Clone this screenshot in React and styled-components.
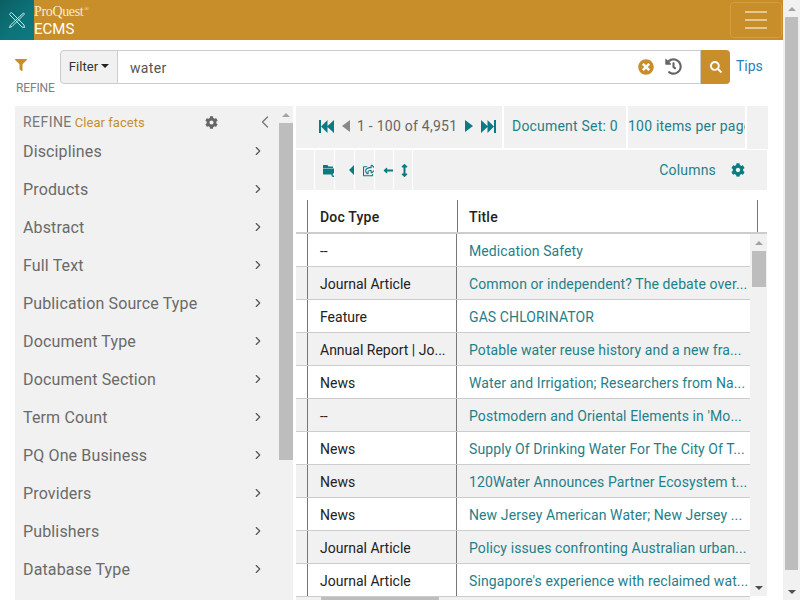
import React from "react";
import styled, { createGlobalStyle } from "styled-components";
import { FaFilter, FaTimesCircle, FaHistory, FaSearch, FaCog, FaRegShareSquare, FaLongArrowAltLeft, FaArrowsAltV } from "react-icons/fa";
import { ChevronLeft, ChevronRight } from "lucide-react";

const Global = createGlobalStyle`
  html, body { margin: 0; padding: 0; height: 100%; overflow: hidden; background: #fff; }
  body { font-family: Roboto, "Liberation Sans", sans-serif; }
`;

const Page = styled.div`display: flex; width: 800px; height: 600px; overflow: hidden;`;
const Main = styled.div`width: 783px; height: 600px; display: flex; flex-direction: column; overflow: hidden;`;

const ScrollTrack = styled.div`
  flex: none; width: ${p => p.$w || 17}px; height: ${p => p.$h ? p.$h + "px" : "100%"};
  background: #f1f1f1; display: flex; flex-direction: column; align-items: center;
`;
const ArrowBox = styled.div`
  flex: none; height: ${p => p.$h || 17}px; width: 100%; display: flex; align-items: center; justify-content: center;
  &::before {
    content: ""; width: 0; height: 0; border-left: 4px solid transparent; border-right: 4px solid transparent;
    ${p => p.$down ? "border-top: 4px solid #505050;" : "border-bottom: 4px solid #a3a3a3;"}
  }
`;
const Thumb = styled.div`flex: none; width: ${p => p.$w || 13}px; height: ${p => p.$h}px; background: #bdbdbd;`;
const TrackFill = styled.div`flex: 1;`;

const Header = styled.header`flex: none; height: 40px; background: #c88e29; display: flex; align-items: stretch;`;
const LogoBox = styled.div`
  width: 34px; background: linear-gradient(135deg, #0c5f63 0%, #0c7379 55%, #0d7a80 100%);
  display: flex; align-items: center; justify-content: center;
`;
const Brand = styled.div`color: #fff; display: flex; flex-direction: column; padding-top: 4px;`;
const BrandTop = styled.div`font-family: "Liberation Serif", serif; font-size: 14px; line-height: 15px; letter-spacing: -0.35px; color: #f6ead4;
  sup { font-size: 6px; line-height: 0; vertical-align: 5px; margin-left: 1px; }`;
const BrandName = styled.div`font-size: 15px; line-height: 17px; margin-top: 2px; font-weight: 400;`;
const Burger = styled.button`
  margin: 2px 1px 2px auto; width: 52px; height: 36px; background: transparent; border: 1px solid #cf9d44; border-radius: 4px; padding: 0;
  display: flex; flex-direction: column; align-items: center; justify-content: center; gap: 6px;
`;
const BurgerBar = styled.span`display: block; width: 22px; height: 2px; background: #e4c793;`;

const SearchRow = styled.div`flex: none; height: 50px; padding: 10px 0 0 15px; display: flex; align-items: flex-start;`;
const RefineCol = styled.div`width: 45px; color: #808080; font-size: 12px; height: 50px; display: flex; flex-direction: column;`;
const RefineIcon = styled.div`color: #c88e29; font-size: 12px; height: 14px; padding-top: 9px; line-height: 0;`;
const RefineLabel = styled.div`margin-top: 8px; padding-left: 1px; line-height: 14px; letter-spacing: -0.15px;`;
const SearchGroup = styled.div`width: 670px; height: 34px; display: flex; box-sizing: border-box;`;
const FilterBtn = styled.div`
  width: 58px; box-sizing: border-box; background: #f1f1f1; border: 1px solid #ccc; border-radius: 4px 0 0 4px; padding-bottom: 2px;
  font-size: 13px; letter-spacing: 0.1px; color: #333; display: flex; align-items: center; justify-content: center; gap: 3px;
  &::after { content: ""; border-left: 4px solid transparent; border-right: 4px solid transparent; border-top: 4px solid #222; }
`;
const SearchInput = styled.div`
  flex: 1; border: 1px solid #ccc; border-left: none; display: flex; align-items: center; padding-left: 12px; color: #555; font-size: 14px; letter-spacing: 0.35px; box-sizing: border-box;
`;
const InputValue = styled.span`padding-top: 2px;`;
const ClearIcon = styled.span`margin-left: auto; color: #c88e29; font-size: 16px; line-height: 0; padding-bottom: 1px;`;
const HistoryIcon = styled.span`margin-left: 11px; margin-right: 18px; color: #666; font-size: 17px; line-height: 0; padding-bottom: 2px;`;
const SearchBtn = styled.div`width: 29px; background: #c88e29; border-radius: 0 4px 4px 0; color: #fff; font-size: 12px; display: flex; align-items: center; justify-content: center;`;
const Tips = styled.div`margin-left: 6px; color: #2a7fbc; font-size: 14px; line-height: 32px;`;

const Content = styled.div`flex: 1; min-height: 0; margin-top: 6px; padding-left: 15px; display: flex; align-items: flex-start;`;
const Sidebar = styled.aside`width: 278px; height: 494px; background: #f1f1f1; display: flex; flex: none;`;
const FacetCol = styled.div`width: 264px; flex: none; overflow: hidden;`;
const FacetHead = styled.div`height: 31px; padding-left: 8px; display: flex; align-items: center; font-size: 14px; letter-spacing: 0.45px; color: #777; box-sizing: border-box; padding-top: 1px;`;
const ClearFacets = styled.span`color: #c88e29; font-size: 13px; margin-left: 3px; letter-spacing: 0.05px;`;
const FacetGear = styled.span`margin-left: 60px; color: #666; font-size: 13px; line-height: 0;`;
const Collapse = styled.span`margin-left: 37px; color: #777; line-height: 0;`;
const Facet = styled.div`
  height: 38px; padding-left: 8px; padding-right: 14px; display: flex; align-items: center; justify-content: space-between;
  margin-top: ${p => p.$first ? "-5px" : "0"}; color: #6a6a6a; font-size: 16px; letter-spacing: 0.14px;
`;
const Chevron = styled.span`color: #555; line-height: 0;`;
const SideBar2 = styled(ScrollTrack)`width: 14px;`;

const Results = styled.section`margin-left: 3px; width: 472px; flex: none;`;
const Pager = styled.div`height: 43px; background: #f1f1f1; display: flex; width: 472px;`;
const PagerCell = styled.div`
  flex: none; width: ${p => p.$w}px; box-sizing: border-box; height: 43px; overflow: hidden; border-right: 2px solid #fff; border-bottom: 1px solid #fff;
  display: flex; align-items: center; white-space: nowrap; font-size: 14px; letter-spacing: 0.2px; color: #1f808a; padding-left: ${p => p.$pl || 0}px; padding-bottom: 2px;
`;
const PagerFill = styled.div`flex: 1;`;
const PageIcon = styled.svg`flex: none; fill: ${p => p.$off ? "#888" : "#0c7a82"}; margin-left: ${p => p.$ml || 0}px; margin-right: ${p => p.$mr || 0}px;`;
const RangeText = styled.span`color: #666; letter-spacing: 0.25px;`;
const Toolbar = styled.div`margin-top: 1px; height: 40px; width: 471px; background: #f1f1f1; display: flex; align-items: stretch;`;
const ToolCell = styled.div`
  flex: none; box-sizing: border-box; width: ${p => p.$w}px; border-right: 1px solid #fff; overflow: hidden; display: flex; align-items: center;
  padding-left: ${p => p.$pl ?? 8}px; color: #0c7a82; font-size: 13px; line-height: 0;
  svg { flex: none; }
`;
const ColumnsLabel = styled.span`margin-left: auto; align-self: center; color: #1f808a; font-size: 14px; letter-spacing: 0.2px;`;
const ToolGear = styled.span`margin-left: 15px; margin-right: 22px; color: #0c7a82; font-size: 14px; align-self: center; line-height: 0;`;

const TableHead = styled.div`margin-top: 10px; height: 34px; width: 471px; display: flex; box-sizing: border-box; border-bottom: 2px solid #ccc;`;
const HeadCell = styled.div`
  box-sizing: border-box; width: ${p => p.$w}px; flex: none; height: 32px; border-left: 1px solid #777; padding: 2px 0 0 ${p => p.$pl}px;
  ${p => p.$last && "border-right: 1px solid #777;"}
  display: flex; align-items: center; font-size: 14px; font-weight: 500; letter-spacing: 0.2px; color: #222; margin-left: ${p => p.$ml || 0}px;
`;
const TableBody = styled.div`display: flex; height: 366px;`;
const Rows = styled.div`width: 454px; flex: none; overflow: hidden;`;
const Row = styled.div`
  display: flex; height: 33px; box-sizing: border-box; border-bottom: 1px solid #ccc; background: ${p => p.$alt ? "#f1f1f1" : "#fff"}; font-size: 14px;
`;
const Gutter = styled.div`width: 11px; flex: none; border-right: 1px solid #777;`;
const TypeCell = styled.div`
  width: 149px; flex: none; box-sizing: border-box; padding: 2px 0 0 12px; border-right: 1px solid #777; display: flex; align-items: center; color: #222; white-space: nowrap; overflow: hidden;
`;
const TitleCell = styled.div`
  flex: 1; min-width: 0; padding-left: 12px; line-height: 34px; letter-spacing: 0.1px; color: #1f808a; white-space: nowrap; overflow: hidden;
`;
const HScroll = styled.div`height: 3px; width: 454px; background: #f1f1f1; padding-left: 25px; box-sizing: border-box;`;
const HThumb = styled.div`width: 118px; height: 3px; background: #bdbdbd;`;

const facets = ["Disciplines", "Products", "Abstract", "Full Text", "Publication Source Type", "Document Type", "Document Section", "Term Count", "PQ One Business", "Providers", "Publishers", "Database Type"];
const rows = [
  ["--", "Medication Safety"],
  ["Journal Article", "Common or independent? The debate over..."],
  ["Feature", "GAS CHLORINATOR"],
  ["Annual Report | Jo...", "Potable water reuse history and a new fra..."],
  ["News", "Water and Irrigation; Researchers from Na..."],
  ["--", "Postmodern and Oriental Elements in 'Mo..."],
  ["News", "Supply Of Drinking Water For The City Of T..."],
  ["News", "120Water Announces Partner Ecosystem t..."],
  ["News", "New Jersey American Water; New Jersey ..."],
  ["Journal Article", "Policy issues confronting Australian urban..."],
  ["Journal Article", "Singapore's experience with reclaimed wat..."],
];

const LogoMark = () => (
  <svg width="18" height="18" viewBox="0 0 18 18" fill="none" stroke="#cfe3e3" strokeWidth="1">
    <path d="M2 2.5 L3.5 1.5 L16 14 L16.5 16.5 L14 16 L1.5 3.5 Z" />
    <path d="M15.5 2 L16.5 3 L4 15.5 L1.5 16.5 L2.5 14 Z" />
  </svg>
);

const FolderMark = () => (
  <svg width="14" height="13" viewBox="0 0 14 13">
    <path d="M0 1 H4.5 L5.5 2.5 H10 V4 H0 Z M0 4.6 H11 V10.5 H0 Z" fill="currentColor" />
    <circle cx="11" cy="10.5" r="2" fill="#f1f1f1" stroke="currentColor" strokeWidth="1.3" />
  </svg>
);

const ReplyMark = () => (
  <svg width="14" height="12" viewBox="0 0 14 12">
    <path d="M0 6 L6 0 V4 H14 V8 H6 V12 Z" fill="currentColor" />
  </svg>
);

const SkipBack = () => (
  <PageIcon width="15" height="13" viewBox="0 0 15 13" $mr={8}>
    <path d="M0 0 H2 V13 H0 Z M2 6.5 L8.5 0 V13 Z M8 6.5 L15 0 V13 Z" />
  </PageIcon>
);
const SkipForward = () => (
  <PageIcon width="15" height="13" viewBox="0 0 15 13">
    <path d="M15 0 H13 V13 H15 Z M13 6.5 L6.5 0 V13 Z M7 6.5 L0 0 V13 Z" />
  </PageIcon>
);

export default function App() {
  return (
    <Page>
      <Global />
      <Main>
        <Header>
          <LogoBox><LogoMark /></LogoBox>
          <Brand>
            <BrandTop>ProQuest<sup>®</sup></BrandTop>
            <BrandName>ECMS</BrandName>
          </Brand>
          <Burger aria-label="menu"><BurgerBar /><BurgerBar /><BurgerBar /></Burger>
        </Header>
        <SearchRow>
          <RefineCol>
            <RefineIcon><FaFilter /></RefineIcon>
            <RefineLabel>REFINE</RefineLabel>
          </RefineCol>
          <SearchGroup>
            <FilterBtn>Filter</FilterBtn>
            <SearchInput>
              <InputValue>water</InputValue>
              <ClearIcon><FaTimesCircle /></ClearIcon>
              <HistoryIcon><FaHistory /></HistoryIcon>
            </SearchInput>
            <SearchBtn><FaSearch /></SearchBtn>
          </SearchGroup>
          <Tips>Tips</Tips>
        </SearchRow>
        <Content>
          <Sidebar>
            <FacetCol>
              <FacetHead>
                REFINE<ClearFacets>Clear facets</ClearFacets>
                <FacetGear><FaCog /></FacetGear>
                <Collapse><ChevronLeft size={20} strokeWidth={1.5} /></Collapse>
              </FacetHead>
              {facets.map((f, i) => (
                <Facet key={f} $first={i === 0}>{f}<Chevron><ChevronRight size={14} strokeWidth={2} /></Chevron></Facet>
              ))}
            </FacetCol>
            <SideBar2>
              <ArrowBox />
              <Thumb $w={14} $h={337} />
              <TrackFill />
            </SideBar2>
          </Sidebar>
          <Results>
            <Pager>
              <PagerCell $w={208} $pl={23}>
                <SkipBack />
                <PageIcon $off width="8" height="12" viewBox="0 0 8 12" $mr={7}><path d="M8 0 V12 L0 6 Z" /></PageIcon>
                <RangeText>1 - 100 of 4,951</RangeText>
                <PageIcon width="8" height="12" viewBox="0 0 8 12" $ml={8} $mr={8}><path d="M0 0 V12 L8 6 Z" /></PageIcon>
                <SkipForward />
              </PagerCell>
              <PagerCell $w={124} $pl={8}>Document Set: 0</PagerCell>
              <PagerCell $w={119}>100 items per page</PagerCell>
              <PagerFill />
            </Pager>
            <Toolbar>
              <ToolCell $w={19} />
              <ToolCell $w={20}><FolderMark /></ToolCell>
              <ToolCell $w={20} $pl={14}><ReplyMark /></ToolCell>
              <ToolCell $w={20}><FaRegShareSquare /></ToolCell>
              <ToolCell $w={19}><FaLongArrowAltLeft /></ToolCell>
              <ToolCell $w={19} $pl={4}><FaArrowsAltV /></ToolCell>
              <ColumnsLabel>Columns</ColumnsLabel>
              <ToolGear><FaCog /></ToolGear>
            </Toolbar>
            <TableHead>
              <HeadCell $ml={11} $w={150} $pl={12}>Doc Type</HeadCell>
              <HeadCell $w={301} $pl={11} $last>Title</HeadCell>
            </TableHead>
            <TableBody>
              <Rows>
                {rows.map((r, i) => (
                  <Row key={i} $alt={i % 2 === 1}>
                    <Gutter />
                    <TypeCell>{r[0]}</TypeCell>
                    <TitleCell>{r[1]}</TitleCell>
                  </Row>
                ))}
                <HScroll><HThumb /></HScroll>
              </Rows>
              <ScrollTrack $h={362}>
                <ArrowBox />
                <Thumb $w={14} $h={36} />
                <TrackFill />
                <ArrowBox $down />
              </ScrollTrack>
            </TableBody>
          </Results>
        </Content>
      </Main>
      <ScrollTrack>
        <ArrowBox />
        <Thumb $w={13} $h={553} />
        <TrackFill />
        <ArrowBox $down />
      </ScrollTrack>
    </Page>
  );
}
